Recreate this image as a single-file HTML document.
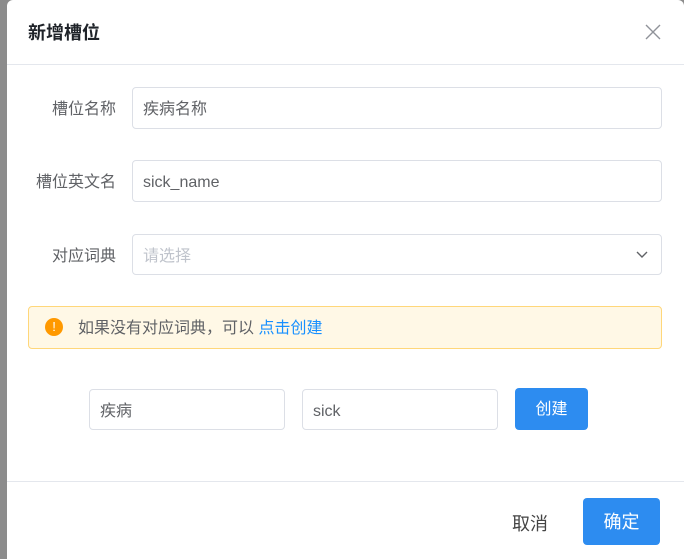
<!DOCTYPE html><html><head><style>
*{box-sizing:border-box;margin:0;padding:0}
body{width:684px;height:559px;background:#8c8c8c;position:relative;overflow:hidden;font-family:"Liberation Sans","Noto Sans CJK SC",sans-serif}
.d{position:absolute;left:7px;top:0;width:677px;height:559px;background:#fff;border-radius:6px 6px 0 0}
.a{position:absolute;line-height:20px}
.in{position:absolute;border:1px solid #dcdfe6;border-radius:4px;background:#fff;font-size:16px;color:#606266;padding-left:10px;line-height:20px;padding-top:12px}
.lb{position:absolute;font-size:16px;color:#606266;text-align:right;width:110px;left:6px;line-height:20px}
</style></head><body>
<div class="d"></div>
<div class="a" style="left:28px;top:23px;font-size:18px;font-weight:bold;color:#1f2329">新增槽位</div>
<svg class="a" style="left:644px;top:23px" width="18" height="18" viewBox="0 0 18 18"><path d="M2 2L16 16M16 2L2 16" stroke="#909399" stroke-width="1.4"/></svg>
<div class="a" style="left:7px;top:64px;width:677px;height:1px;background:#e4e7ed"></div>
<div class="lb" style="top:100px">槽位名称</div>
<div class="in" style="left:132px;top:87px;width:530px;height:42px">疾病名称</div>
<div class="lb" style="top:173px">槽位英文名</div>
<div class="in" style="left:132px;top:160px;width:530px;height:42px">sick_name</div>
<div class="lb" style="top:247px">对应词典</div>
<div class="in" style="left:132px;top:234px;width:530px;height:41px;color:#c0c4cc">请选择</div>
<svg class="a" style="left:636px;top:248px" width="12" height="12" viewBox="0 0 12 12"><path d="M1 4L6 9L11 4" stroke="#606266" stroke-width="1.4" fill="none"/></svg>
<div class="a" style="left:28px;top:306px;width:634px;height:43px;background:#fff8e6;border:1px solid #ffd77a;border-radius:4px"></div>
<div class="a" style="left:45px;top:318px;width:18px;height:18px;border-radius:50%;background:#ff9900;color:#fff;font-size:13px;text-align:center;line-height:18px">!</div>
<div class="a" style="left:78px;top:319px;font-size:16px;color:#606266">如果没有对应词典，可以 <span style="color:#1890ff">点击创建</span></div>
<div class="in" style="left:89px;top:389px;width:196px;height:41px">疾病</div>
<div class="in" style="left:302px;top:389px;width:196px;height:41px">sick</div>
<div class="a" style="left:515px;top:388px;width:73px;height:42px;background:#2d8cf0;border-radius:4px;color:#fff;font-size:16px;text-align:center;line-height:20px;padding-top:12px">创建</div>
<div class="a" style="left:7px;top:481px;width:677px;height:1px;background:#e4e7ed"></div>
<div class="a" style="left:512px;top:513px;font-size:18px;color:#444;line-height:22px">取消</div>
<div class="a" style="left:583px;top:498px;width:77px;height:47px;background:#2d8cf0;border-radius:4px;color:#fff;font-size:18px;text-align:center;line-height:22px;padding-top:13px">确定</div>
</body></html>
